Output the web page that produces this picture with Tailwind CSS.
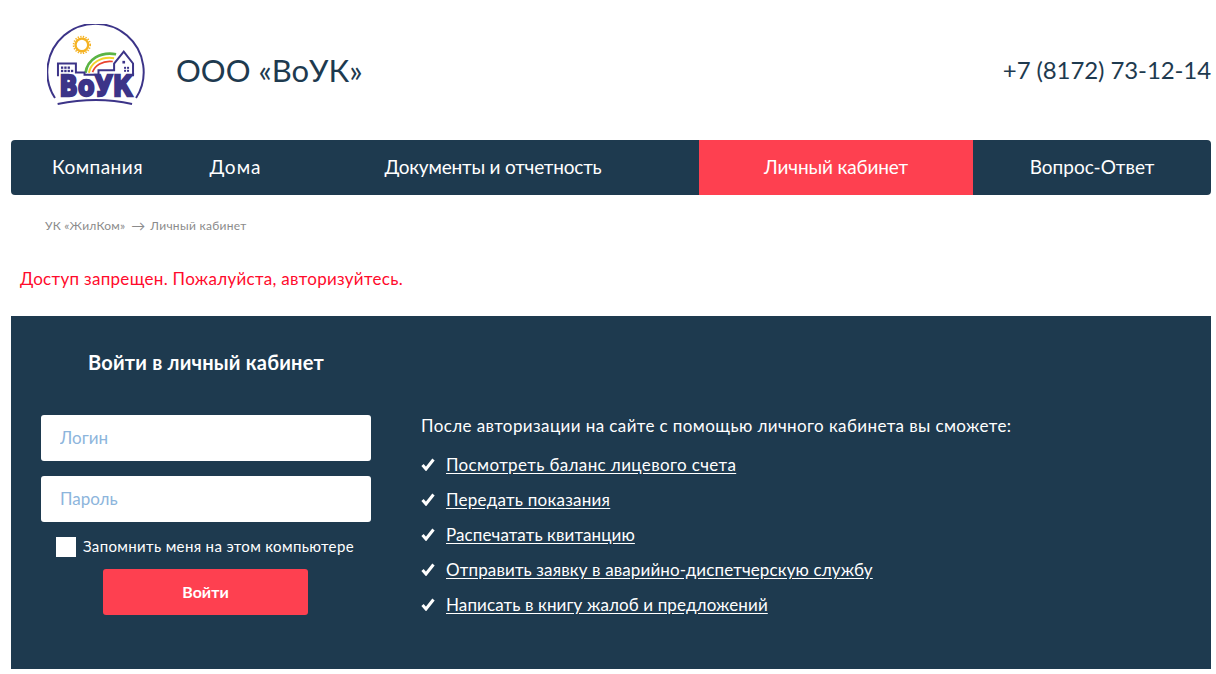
<!DOCTYPE html>
<html lang="ru">
<head>
  <meta charset="UTF-8">
  <title>ООО «ВоУК»</title>
  <script src="https://cdn.jsdelivr.net/npm/@tailwindcss/browser@4"></script>
</head>
<body class="bg-white font-['Lato',sans-serif] text-[#1e3a4f]">
  <div class="ml-[11px] w-[1200px]">
    <!-- header -->
    <header class="h-[140px] flex items-center">
      <svg class="ml-[36px] -mt-[11px] shrink-0" width="98" height="82" viewBox="50 40 295 245">
        <path d="M74 262A145 145 0 1 1 318 262" fill="none" stroke="#3c3488" stroke-width="6"/>
        <path d="M82 280Q200 256 306 280" fill="none" stroke="#3c3488" stroke-width="6"/>
        <circle cx="155" cy="102" r="19" fill="none" stroke="#f5b324" stroke-width="7"/>
        <circle cx="155" cy="102" r="25" fill="none" stroke="#f5b324" stroke-width="5" stroke-dasharray="4 4"/>
        <path d="M166 186C172 145 210 122 258 130" fill="none" stroke="#5bb445" stroke-width="8"/>
        <path d="M176 186C182 156 212 136 252 142" fill="none" stroke="#f3d42a" stroke-width="6"/>
        <path d="M187 184C194 165 216 148 248 152" fill="none" stroke="#e8432e" stroke-width="5"/>
        <path d="M83 196V158H137V185H163V192H205V178H252V158L281 122L309 158V196" fill="none" stroke="#3c3488" stroke-width="6"/>
        <g fill="#3c3488">
          <rect x="92" y="167" width="7" height="7"/><rect x="102" y="167" width="7" height="7"/><rect x="112" y="167" width="7" height="7"/>
          <rect x="92" y="177" width="7" height="7"/><rect x="102" y="177" width="7" height="7"/><rect x="112" y="177" width="7" height="7"/><rect x="122" y="177" width="7" height="7"/>
          <rect x="277" y="150" width="8" height="8"/>
          <rect x="282" y="168" width="6" height="6"/><rect x="291" y="168" width="6" height="6"/><rect x="282" y="177" width="6" height="6"/><rect x="291" y="177" width="6" height="6"/>
        </g>
        <text x="88" y="255" textLength="220" lengthAdjust="spacingAndGlyphs" font-family="DejaVu Sans" font-weight="700" font-size="84" fill="#3c3488" stroke="#3c3488" stroke-width="7">ВоУК</text>
      </svg>
      <div class="ml-[31px] text-[31px] leading-none">ООО «ВоУК»</div>
      <div class="ml-auto text-[24px] leading-none -tracking-[0.1px]">+7 (8172) 73-12-14</div>
    </header>

    <!-- nav -->
    <nav class="h-[55px] bg-[#1e3a4f] rounded-[4px] overflow-hidden flex text-white text-[19px]">
      <a class="w-[173px] flex items-center justify-center tracking-[0.45px]">Компания</a>
      <a class="w-[103px] flex items-center justify-center tracking-[1px]">Дома</a>
      <a class="w-[412px] flex items-center justify-center -tracking-[0.2px]">Документы и отчетность</a>
      <a class="w-[274px] flex items-center justify-center bg-[#fe4050] -tracking-[0.15px]">Личный кабинет</a>
      <a class="w-[238px] flex items-center justify-center">Вопрос-Ответ</a>
    </nav>

    <!-- breadcrumbs -->
    <div class="mt-[23px] ml-[34px] flex items-center h-[16px] text-[12px] text-[#8b8b8b]">
      <span class="tracking-[0.2px]">УК «ЖилКом»</span>
      <span class="ml-[6px] mr-[7px] w-[12px] text-[14px] leading-none">→</span>
      <span class="tracking-[0.3px]">Личный кабинет</span>
    </div>

    <p class="mt-[34px] ml-[9px] h-[22px] leading-[22px] text-[17px] tracking-[0.3px] text-[#ff0a2c]">Доступ запрещен. Пожалуйста, авторизуйтесь.</p>

    <!-- login -->
    <section class="mt-[26px] h-[353px] bg-[#1e3a4f] text-white pl-[30px] pt-[31px]">
      <h2 class="w-[330px] text-center text-[20px] leading-[30px] font-bold tracking-[0.2px]">Войти в личный кабинет</h2>
      <div class="mt-[38px] flex">
        <form class="w-[330px] flex flex-col">
          <input type="text" placeholder="Логин" class="h-[46px] bg-white rounded-[3px] px-[19px] pb-[2px] text-[17px] text-[#1e3a4f] placeholder:text-[#8db5dc] outline-none">
          <input type="password" placeholder="Пароль" class="mt-[15px] h-[46px] bg-white rounded-[3px] px-[19px] pb-[2px] text-[17px] text-[#1e3a4f] placeholder:text-[#8db5dc] outline-none">
          <label class="mt-[15px] ml-[15px] flex items-center h-[20px] text-[15px] tracking-[0.35px]">
            <span class="w-[20px] h-[20px] bg-white mr-[7px] shrink-0"></span>
            <span class="-mt-[1px]">Запомнить меня на этом компьютере</span>
          </label>
          <button type="button" class="mt-[12px] ml-[62px] w-[205px] h-[46px] bg-[#fe4050] rounded-[3px] text-white text-[16px] font-bold">Войти</button>
        </form>
        <div class="ml-[50px] pt-[1px]">
          <p class="h-[20px] leading-[20px] text-[17px] tracking-[0.4px]">После авторизации на сайте с помощью личного кабинета вы сможете:</p>
          <ul class="mt-[11px] text-[17px]">
            <li class="h-[35px] flex items-center"><svg class="w-[14px] h-[13px] mr-[11px]" viewBox="0 0 14 13"><path d="M1.5 7L5 11L12.5 1.5" fill="none" stroke="white" stroke-width="3"/></svg><a class="underline underline-offset-2 tracking-[0.37px]">Посмотреть баланс лицевого счета</a></li>
            <li class="h-[35px] flex items-center"><svg class="w-[14px] h-[13px] mr-[11px]" viewBox="0 0 14 13"><path d="M1.5 7L5 11L12.5 1.5" fill="none" stroke="white" stroke-width="3"/></svg><a class="underline underline-offset-2 tracking-[0.25px]">Передать показания</a></li>
            <li class="h-[35px] flex items-center"><svg class="w-[14px] h-[13px] mr-[11px]" viewBox="0 0 14 13"><path d="M1.5 7L5 11L12.5 1.5" fill="none" stroke="white" stroke-width="3"/></svg><a class="underline underline-offset-2 tracking-[0.1px]">Распечатать квитанцию</a></li>
            <li class="h-[35px] flex items-center"><svg class="w-[14px] h-[13px] mr-[11px]" viewBox="0 0 14 13"><path d="M1.5 7L5 11L12.5 1.5" fill="none" stroke="white" stroke-width="3"/></svg><a class="underline underline-offset-2 tracking-[0.13px]">Отправить заявку в аварийно-диспетчерскую службу</a></li>
            <li class="h-[35px] flex items-center"><svg class="w-[14px] h-[13px] mr-[11px]" viewBox="0 0 14 13"><path d="M1.5 7L5 11L12.5 1.5" fill="none" stroke="white" stroke-width="3"/></svg><a class="underline underline-offset-2 tracking-[0.11px]">Написать в книгу жалоб и предложений</a></li>
          </ul>
        </div>
      </div>
    </section>
  </div>
</body>
</html>
